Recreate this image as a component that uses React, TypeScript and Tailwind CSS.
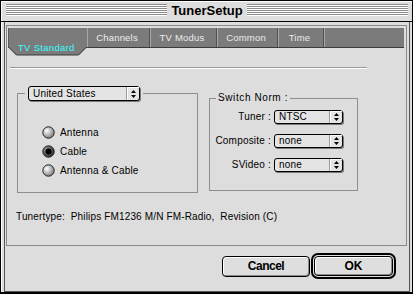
import React from "react";

const F = "font-['Liberation_Sans',Arial,sans-serif]";

function Stripes() {
  return (
    <div className="flex flex-1 flex-col">
      {[0, 1, 2, 3, 4, 5].map((i) => (
        <React.Fragment key={i}>
          <div className="h-px bg-[#8c8c8c]" />
          <div className="h-px bg-white" />
        </React.Fragment>
      ))}
    </div>
  );
}

function Arrows() {
  return (
    <svg width="5" height="8" viewBox="0 0 5 8">
      <path d="M2.5 0 L5 3 L0 3 Z M0 5 L5 5 L2.5 8 Z" fill="#000" />
    </svg>
  );
}

function Popup({ label, className }: { label: string; className: string }) {
  return (
    <div
      className={`flex rounded-[3px] border border-black bg-[#e4e4e4] shadow-[1px_1px_0_#7a7a7a] ${className}`}
    >
      <div className="flex flex-1 items-center pl-[4px] text-[10px] leading-none tracking-[0.2px]">{label}</div>
      <div className="flex w-[13px] items-center justify-center border-l border-[#9a9a9a] shadow-[inset_1px_1px_0_#fff]">
        <Arrows />
      </div>
    </div>
  );
}

function Radio({ checked }: { checked?: boolean }) {
  return (
    <svg width="13" height="13" viewBox="0 0 13 13">
      <defs>
        <radialGradient id="rg1" cx="35%" cy="35%" r="70%">
          <stop offset="0" stopColor="#ffffff" />
          <stop offset="1" stopColor="#7c7c7c" />
        </radialGradient>
        <radialGradient id="rg2" cx="35%" cy="35%" r="70%">
          <stop offset="0" stopColor="#9a9a9a" />
          <stop offset="1" stopColor="#2a2a2a" />
        </radialGradient>
      </defs>
      <circle cx="6.5" cy="6.5" r="5.7" fill={checked ? "url(#rg2)" : "url(#rg1)"} stroke="#222" strokeWidth="1" />
      {checked && <circle cx="6.5" cy="6.5" r="3" fill="#000" />}
    </svg>
  );
}

function Tab({ w, children }: { w: string; children: React.ReactNode }) {
  return (
    <div
      className={`flex shrink-0 items-center justify-center border-l border-r border-l-[#a8a8a8] border-r-[#505050] pr-[3px] text-[9.5px] leading-[12px] tracking-[0.2px] text-[#ececec] ${w}`}
    >
      {children}
    </div>
  );
}

function SelectedTab() {
  return (
    <div className="relative h-[28px] w-[79px] shrink-0">
      <svg className="absolute inset-0" width="79" height="28" viewBox="0 0 79 28">
        <polygon points="0,0 79,0 79,19 71,27 8,27 0,19" fill="#7b7b7b" />
        <polyline points="0.5,19 8.5,27 70.5,27 78.5,19" fill="none" stroke="#3a3a3a" strokeWidth="1" />
        <line x1="0.5" y1="0" x2="0.5" y2="19" stroke="#5a5a5a" />
      </svg>
      <div className="relative pl-[10px] pt-[14px] text-[9.5px] leading-[12px] tracking-[0.3px] text-[#33ffff]">TV Standard</div>
    </div>
  );
}

function Row({ label, value }: { label: string; value: string }) {
  return (
    <div className="flex h-[14px] items-center">
      <div className="w-[61px] whitespace-pre text-right text-[10px] leading-[12px] tracking-[0.2px]">{label}</div>
      <Popup label={value} className="ml-[3px] h-[14px] w-[69px]" />
    </div>
  );
}

function Panel() {
  return (
    <div className="h-[221px] w-[401px] border border-[#8a8a8a] pl-px pr-[2px] pt-[2px]">
      <div className="flex h-[20px] border-b border-[#3a3a3a] bg-[#7b7b7b]">
        <SelectedTab />
        <Tab w="w-[63px]">Channels</Tab>
        <Tab w="w-[67px]">TV Modus</Tab>
        <Tab w="w-[61px]">Common</Tab>
        <Tab w="w-[46px]">Time</Tab>
        <div className="flex-1 border-l border-[#a8a8a8]" />
      </div>
      <div className="ml-[2px] mt-[19px] h-px w-[357px] bg-[#9a9a9a] shadow-[0_1px_0_#fff]" />
      <div className="mt-[18px] flex items-start pl-[9px]">
        <fieldset className="w-[181px] border border-[#8f8f8f]">
          <legend className="ml-[7px] px-[3px]">
            <Popup label="United States" className="h-[15px] w-[112px]" />
          </legend>
          <div className="flex flex-col pb-[12px] pl-[24px] pt-[22px] text-[10px] leading-[12px] tracking-[0.2px]">
            <div className="flex h-[19px] items-center gap-[5px]">
              <Radio />
              <span>Antenna</span>
            </div>
            <div className="flex h-[19px] items-center gap-[5px]">
              <Radio checked />
              <span>Cable</span>
            </div>
            <div className="flex h-[19px] items-center gap-[5px]">
              <Radio />
              <span>Antenna &amp; Cable</span>
            </div>
          </div>
        </fieldset>
        <fieldset className="ml-[11px] mt-[6px] w-[149px] border border-[#8f8f8f]">
          <legend className="ml-[6px] whitespace-pre px-[2px] text-[10px] leading-[12px] tracking-[0.6px]">Switch Norm :</legend>
          <div className="flex flex-col gap-[10px] pb-[18px] pt-[6px]">
            <Row label="Tuner :" value="NTSC" />
            <Row label="Composite :" value="none" />
            <Row label="SVideo :" value="none" />
          </div>
        </fieldset>
      </div>
      <div className="ml-[8px] mt-[18px] whitespace-pre text-[10px] leading-[12px] tracking-[0.15px]">
        {"Tunertype:  Philips FM1236 M/N FM-Radio,  Revision (C)"}
      </div>
    </div>
  );
}

function Buttons() {
  return (
    <div className="mt-[7px] flex items-center justify-end pr-[13px]">
      <div className="mr-px flex h-[21px] w-[88px] items-center justify-center rounded-[4px] border border-black bg-[#dedede] text-[12px] font-bold tracking-[-0.5px] shadow-[inset_1px_1px_0_#fff,inset_-1px_-1px_0_#8a8a8a]">
        Cancel
      </div>
      <div className="h-[26px] w-[85px] rounded-[7px] border-[2px] border-black p-px">
        <div className="flex h-full w-full items-center justify-center rounded-[4px] border border-black bg-[#dedede] text-[12px] font-bold shadow-[inset_1px_1px_0_#fff,inset_-1px_-1px_0_#8a8a8a]">
          OK
        </div>
      </div>
    </div>
  );
}

export default function App() {
  return (
    <div className={`h-[294px] w-[413px] bg-black px-px pb-[2px] pt-px text-black ${F}`}>
      <div className="flex h-[20px] items-start bg-[#dddddd] pl-[5px] pr-[4px] pt-[3px] shadow-[inset_1px_1px_0_#fff]">
        <Stripes />
        <div className="px-[4px] text-[13px] font-bold leading-[13px]">TunerSetup</div>
        <Stripes />
      </div>
      <div className="h-px bg-black" />
      <div className="h-[270px] bg-[#dddddd] pl-[3px] pr-[2px] shadow-[inset_1px_0_0_#fff]">
        <div className="h-full border-x border-b border-[#555] pl-px pt-[3px]">
          <Panel />
          <Buttons />
        </div>
      </div>
    </div>
  );
}
